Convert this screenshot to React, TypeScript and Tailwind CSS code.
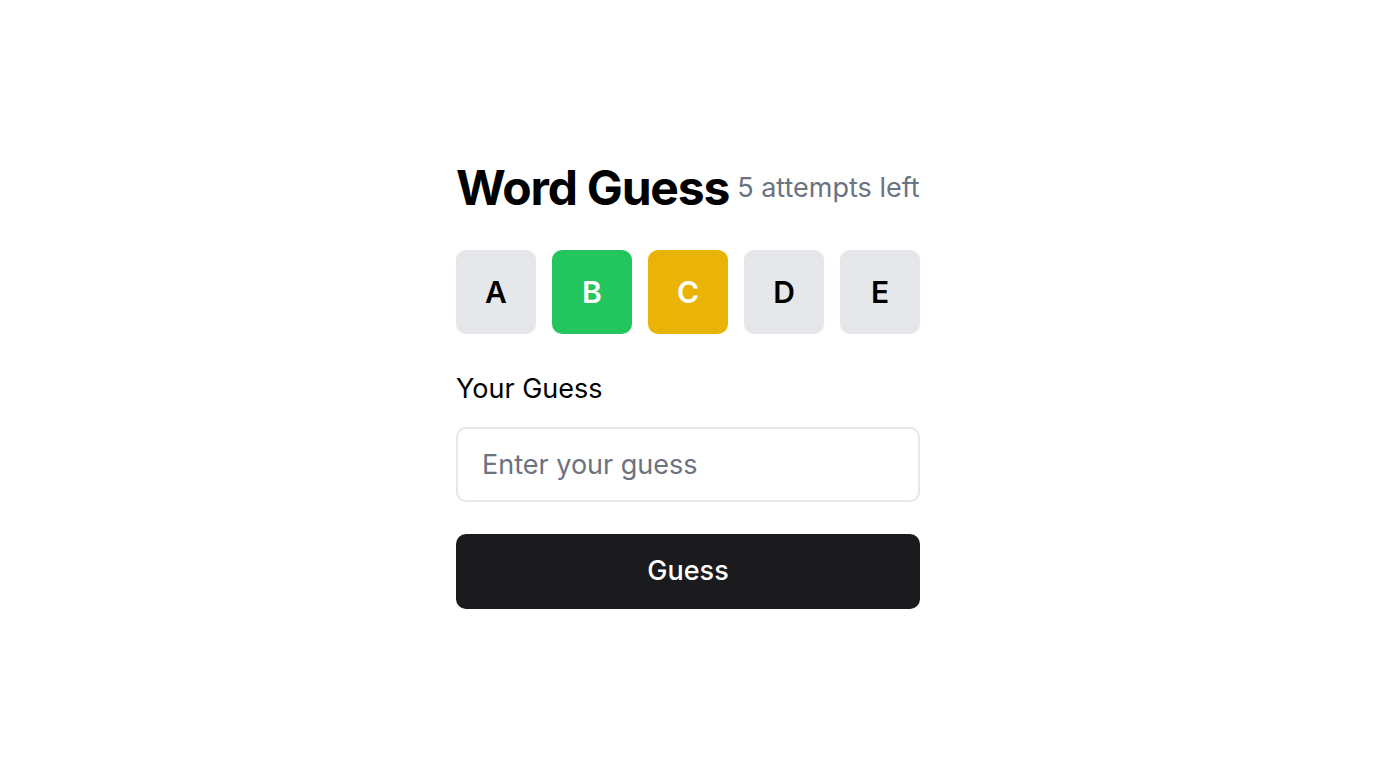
const tiles = [
  { letter: 'A', tone: 'bg-[#e5e7eb] text-black' },
  { letter: 'B', tone: 'bg-[#22c55e] text-white' },
  { letter: 'C', tone: 'bg-[#eab308] text-white' },
  { letter: 'D', tone: 'bg-[#e5e7eb] text-black' },
  { letter: 'E', tone: 'bg-[#e5e7eb] text-black' },
];

export default function App() {
  return (
    <div
      className="min-h-screen bg-white flex items-center justify-center"
      style={{ fontFamily: 'Inter, "Noto Sans", sans-serif' }}
    >
      <div className="w-[464px] flex flex-col pt-1">
        <div className="flex items-center gap-2 mb-[38px]">
          <h1 className="text-[48px] leading-[48px] font-bold text-black tracking-tight">Word Guess</h1>
          <span className="text-[27px] leading-[32px] text-[#6b7280]">5 attempts left</span>
        </div>

        <div className="grid grid-cols-5 gap-4 mb-[39px]">
          {tiles.map((t) => (
            <div
              key={t.letter}
              className={`h-[84px] rounded-[10px] flex items-center justify-center text-3xl font-semibold ${t.tone}`}
            >
              {t.letter}
            </div>
          ))}
        </div>

        <label className="text-[27px] leading-[32px] text-black mb-[22px]">Your Guess</label>
        <input
          type="text"
          placeholder="Enter your guess"
          className="h-[75px] w-full rounded-[10px] border-2 border-[#e5e7eb] px-6 text-[27px] text-black placeholder:text-[#6b7280] outline-none mb-8"
        />
        <button className="h-[75px] w-full rounded-[10px] bg-[#1b1b1d] text-white text-[27px] font-medium">
          Guess
        </button>
      </div>
    </div>
  );
}
